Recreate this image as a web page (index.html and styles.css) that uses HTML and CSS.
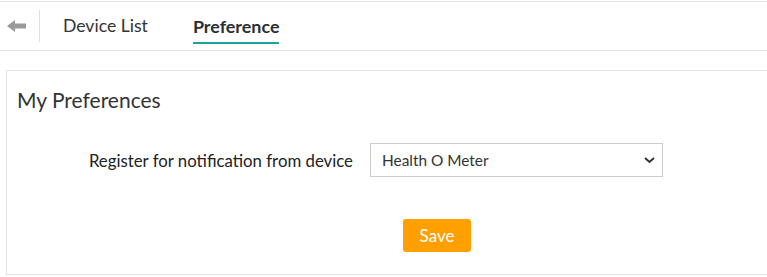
FILE: index.html
```html
<!DOCTYPE html>
<html lang="en">
<head>
  <meta charset="UTF-8">
  <title>Preference</title>
  <link rel="stylesheet" href="styles.css">
</head>
<body>

  <div class="topbar">
    <div class="back">
      <svg width="19" height="12" viewBox="0 0 19 12"><path d="M0 6 L8 0 L8 3.5 L19 3.5 L19 8.5 L8 8.5 L8 12 Z" fill="#9a9a9a"/></svg>
    </div>
    <div class="divider"></div>
    <div class="tabs">
      <span class="tab">Device List</span>
      <span class="tab active">Preference</span>
    </div>
  </div>

  <div class="card">
    <h3>My Preferences</h3>

    <div class="form-row">
      <label>Register for notification from device</label>
      <div class="select-wrap">
        <select>
          <option selected>Health O Meter</option>
          <option>Welch Allyn</option>
        </select>
        <svg class="chevron" width="11" height="7" viewBox="0 0 11 7"><path d="M1 1 L5.5 5 L10 1" stroke="#333" stroke-width="2" fill="none"/></svg>
      </div>
    </div>

    <div class="actions">
      <button>Save</button>
    </div>
  </div>

</body>
</html>
```

FILE: styles.css
```css
* {
  box-sizing: border-box;
}

body {
  margin: 0;
  font-family: Lato, "Liberation Sans", sans-serif;
  background-color: #fff;
  color: #333;
}

.topbar {
  margin-top: 1px;
  height: 50px;
  border-top: 1px solid #e3e3e3;
  border-bottom: 1px solid #e3e3e3;
  display: flex;
  align-items: center;
}

.back {
  width: 39px;
  padding-left: 7px;
  display: flex;
  align-items: center;
}

.divider {
  width: 1px;
  height: 32px;
  background-color: #e0e0e0;
}

.tabs {
  align-self: flex-end;
  display: flex;
  gap: 45px;
  margin-left: 23px;
  margin-bottom: 6px;
}

.tab {
  font-size: 17.6px;
  line-height: 20px;
  padding-bottom: 6px;
  border-bottom: 2px solid transparent;
  color: #333;
}

.tab.active {
  font-size: 17.9px;
  font-weight: bold;
  color: #2b2f33;
  border-bottom-color: #1ba39b;
}

.card {
  margin: 19px -10px 0 6px;
  border: 1px solid #e3e3e3;
  padding: 17px 10px 22px;
}

.card h3 {
  margin: 0;
  font-size: 21px;
  line-height: 24px;
  font-weight: normal;
  color: #333;
}

.form-row {
  margin-top: 31px;
  display: flex;
  align-items: center;
  gap: 17px;
}

.form-row label {
  width: 336px;
  text-align: right;
  font-size: 16.8px;
  color: #222;
}

.select-wrap {
  position: relative;
  width: 293px;
}

.select-wrap select {
  width: 100%;
  height: 34px;
  padding: 0 30px 0 11px;
  border: 1px solid #ccc;
  background-color: #fff;
  font-family: Lato, "Liberation Sans", sans-serif;
  font-size: 15.4px;
  color: #333;
  appearance: none;
  -webkit-appearance: none;
  border-radius: 0;
}

.chevron {
  position: absolute;
  right: 8px;
  top: 14px;
  pointer-events: none;
}

.actions {
  margin-top: 42px;
  padding-left: 386px;
}

.actions button {
  background-color: #ffa000;
  color: #fff;
  border: none;
  border-radius: 3px;
  font-family: Lato, "Liberation Sans", sans-serif;
  font-size: 17px;
  line-height: 21px;
  padding: 6px 0;
  width: 68px;
}
```
